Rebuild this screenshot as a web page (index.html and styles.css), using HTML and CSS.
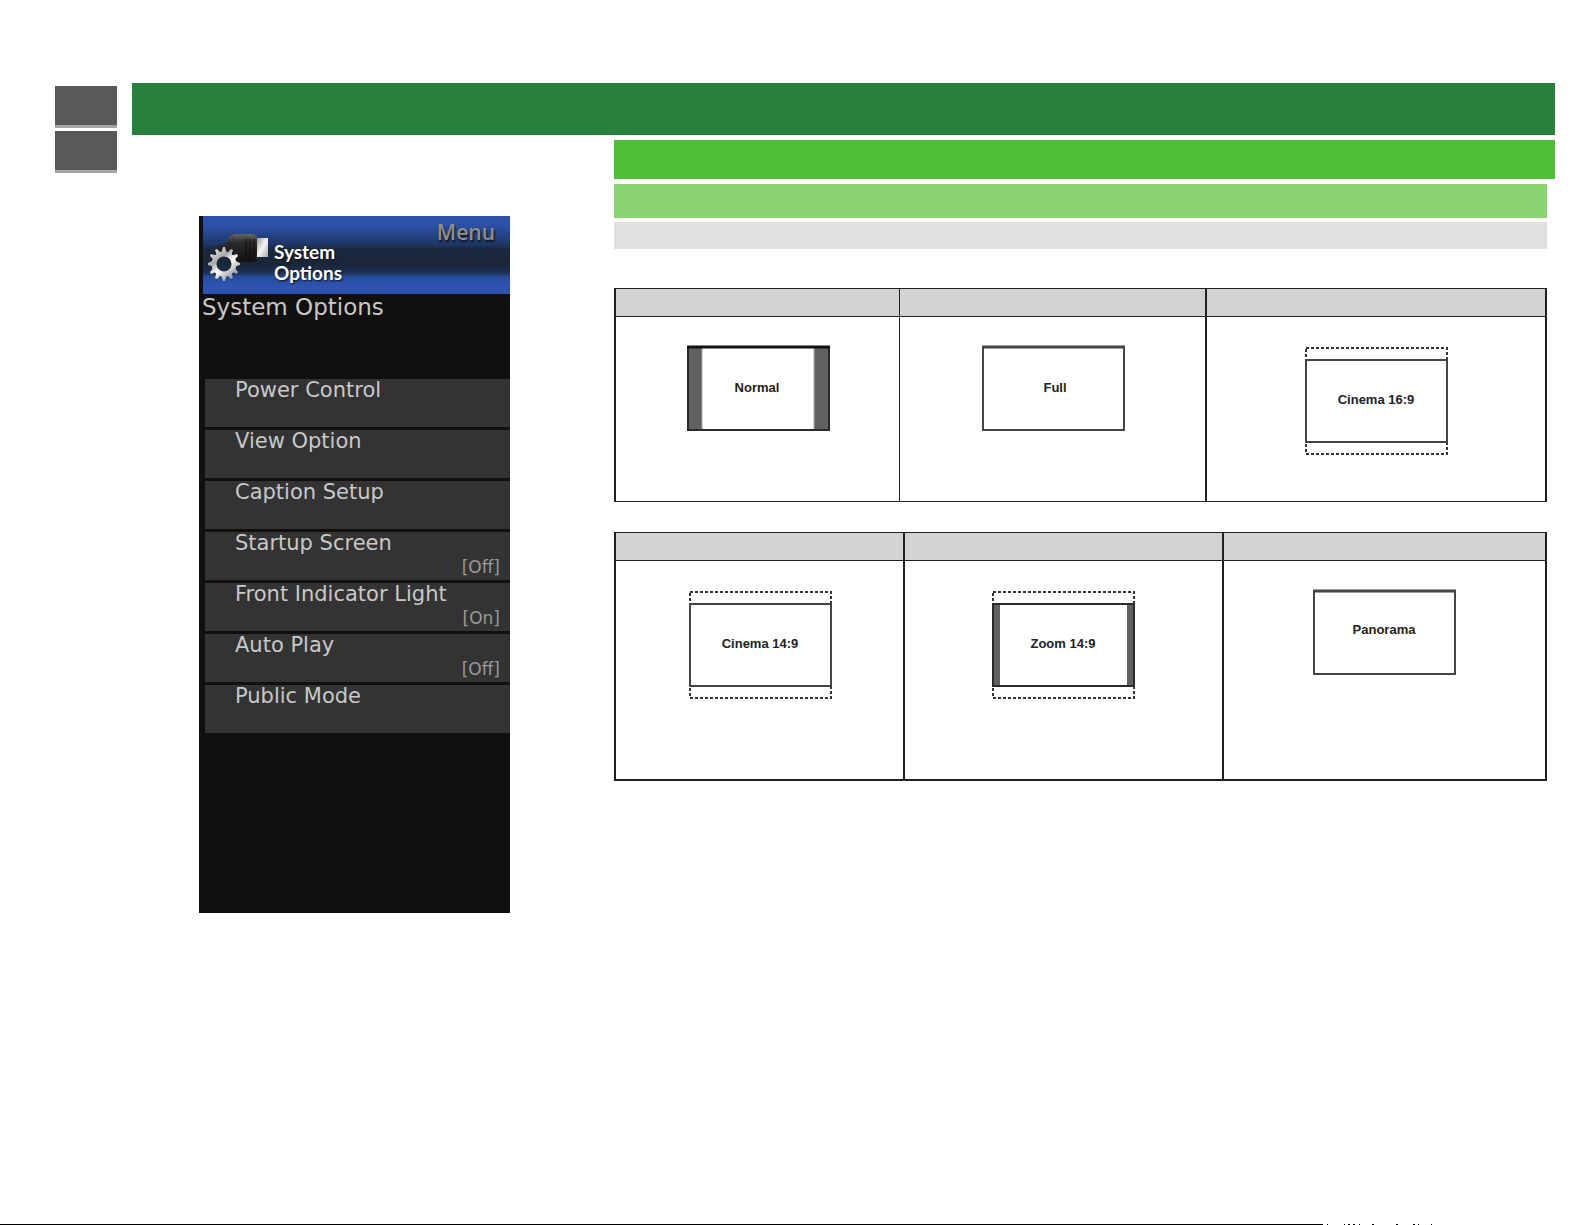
FILE: index.html
```
<!DOCTYPE html>
<html lang="en">
<head>
    <meta charset="UTF-8">
    <meta name="viewport" content="width=device-width, initial-scale=1.0">
    <title>System Options</title>
    <link rel="stylesheet" href="styles.css">
</head>
<body>

    <div class="page">
        <nav class="tabs">
            <a href="#" aria-label="Previous"></a>
            <a href="#" aria-label="Next"></a>
        </nav>

        <div class="content">
            <header class="title-bar"></header>

            <div class="columns">
                <aside class="left">
                    <section class="tv-menu">
                        <div class="menu-head">
                            <svg class="menu-icon" width="64" height="52" viewBox="0 0 64 52">
                                <defs>
                                    <linearGradient id="plug" x1="0" y1="0" x2="0" y2="1">
                                        <stop offset="0" stop-color="#666"/>
                                        <stop offset="0.3" stop-color="#2b2b2b"/>
                                        <stop offset="1" stop-color="#111"/>
                                    </linearGradient>
                                    <linearGradient id="tip" x1="0" y1="0" x2="1" y2="1">
                                        <stop offset="0" stop-color="#999"/>
                                        <stop offset="0.5" stop-color="#f4f4f4"/>
                                        <stop offset="1" stop-color="#aaa"/>
                                    </linearGradient>
                                    <linearGradient id="metal" gradientUnits="userSpaceOnUse" x1="4" y1="14" x2="30" y2="46">
                                        <stop offset="0" stop-color="#eee"/>
                                        <stop offset="0.35" stop-color="#aaa"/>
                                        <stop offset="0.55" stop-color="#fff"/>
                                        <stop offset="1" stop-color="#777"/>
                                    </linearGradient>
                                </defs>
                                <path d="M8 13 L20 10 L22 4 L28 0 L48 0 L51 3 L51 26 L46 28 L24 27 Z" fill="url(#plug)"/>
                                <path d="M40 5 V23 M44 5 V23 M48 5 V23" stroke="#0c0c0c" stroke-width="1"/>
                                <rect x="51" y="4" width="11" height="19" fill="url(#tip)"/>
                                <circle cx="18" cy="30" r="10" fill="none" stroke="url(#metal)" stroke-width="5"/>
                                <path fill="url(#metal)" d="M15 20 L17 13 H19 L21 20Z M20 20 L25 15 L27 16 L25 22Z M24 22 L31 20 L32 22 L27 27Z M27 26 L34 29 V31 L27 33Z M27 32 L32 38 L31 40 L24 37Z M25 37 L27 44 L25 45 L20 40Z M21 40 L19 47 H17 L15 40Z M16 40 L11 45 L9 44 L11 37Z M12 37 L5 40 L4 38 L9 32Z M9 33 L2 31 V29 L9 26Z M9 27 L4 22 L5 20 L12 22Z M11 22 L9 16 L11 15 L16 20Z"/>
                            </svg>
                            <h2 class="menu-name">System<br>Options</h2>
                            <span class="menu-label">Menu</span>
                        </div>
                        <h3 class="menu-title">System Options</h3>
                        <ul class="menu-list">
                            <li><button type="button">Power Control</button></li>
                            <li><button type="button">View Option</button></li>
                            <li><button type="button">Caption Setup</button></li>
                            <li><button type="button">Startup Screen <span>[Off]</span></button></li>
                            <li><button type="button">Front Indicator Light <span>[On]</span></button></li>
                            <li><button type="button">Auto Play <span>[Off]</span></button></li>
                            <li><button type="button">Public Mode</button></li>
                        </ul>
                    </section>
                </aside>

                <main class="right">
                    <div class="bar bar-section"></div>
                    <div class="inner">
                        <div class="bar bar-topic"></div>
                        <div class="bar bar-note"></div>

                        <table class="modes modes-first">
                            <thead>
                                <tr><th></th><th></th><th></th></tr>
                            </thead>
                            <tbody>
                                <tr>
                                    <td>
                                        <svg width="142" height="86">
                                            <rect x="1" y="1" width="14" height="84" fill="#606162"/>
                                            <rect x="127" y="1" width="15" height="84" fill="#606162"/>
                                            <path d="M15 2 V84 M127 2 V84" stroke="#aaa"/>
                                            <rect class="frame dark" x="1" y="1" width="141" height="83"/>
                                            <path class="edge" d="M0 1 H143"/>
                                            <text x="70" y="46">Normal</text>
                                        </svg>
                                    </td>
                                    <td>
                                        <svg width="142" height="86">
                                            <rect class="frame" x="1" y="1" width="141" height="83"/>
                                            <path class="edge soft" d="M0 1 H143"/>
                                            <text x="73" y="46">Full</text>
                                        </svg>
                                    </td>
                                    <td>
                                        <svg width="142" height="110">
                                            <rect class="dots" x="1" y="2" width="141" height="106"/>
                                            <rect class="frame" x="1" y="14" width="141" height="82"/>
                                            <text x="71" y="58">Cinema 16:9</text>
                                        </svg>
                                    </td>
                                </tr>
                            </tbody>
                        </table>

                        <table class="modes modes-second">
                            <thead>
                                <tr><th></th><th></th><th></th></tr>
                            </thead>
                            <tbody>
                                <tr>
                                    <td>
                                        <svg width="142" height="110">
                                            <rect class="dots" x="1" y="2" width="141" height="106"/>
                                            <rect class="frame" x="1" y="14" width="141" height="82"/>
                                            <text x="71" y="58">Cinema 14:9</text>
                                        </svg>
                                    </td>
                                    <td>
                                        <svg width="142" height="110">
                                            <rect class="dots" x="1" y="2" width="141" height="106"/>
                                            <rect x="1" y="14" width="7" height="82" fill="#606162"/>
                                            <rect x="135" y="14" width="7" height="82" fill="#606162"/>
                                            <rect class="frame dark" x="1" y="14" width="141" height="82"/>
                                            <text x="71" y="58">Zoom 14:9</text>
                                        </svg>
                                    </td>
                                    <td>
                                        <svg width="142" height="86">
                                            <rect class="frame" x="1" y="1" width="141" height="83"/>
                                            <path class="edge soft" d="M0 1 H143"/>
                                            <text x="71" y="44">Panorama</text>
                                        </svg>
                                    </td>
                                </tr>
                            </tbody>
                        </table>
                    </div>
                </main>
            </div>
        </div>
    </div>

    <footer class="page-end">
        <div class="rule"></div>
        <svg width="112" height="1" viewBox="0 0 112 1">
            <path d="M4 0h1v1h-1z M21 0h1v1h-1z M25 0h2v1h-2z M30 0h2v1h-2z M36 0h1v1h-1z M49 0h2v1h-2z M73 0h2v1h-2z M90 0h2v1h-2z M95 0h1v1h-1z M108 0h1v1h-1z"/>
        </svg>
    </footer>

</body>
</html>
```
FILE: styles.css
```
* {
    box-sizing: border-box;
}
body {
    margin: 0;
    min-height: 100vh;
    display: flex;
    flex-direction: column;
    background: white;
    font-family: "Liberation Sans", Arial, sans-serif;
}
.page {
    flex: 1;
    display: flex;
    gap: 15px;
    padding: 83px 30px 0 55px;
}

/* page tabs */
.tabs {
    flex: none;
    width: 62px;
    padding-top: 3px;
}
.tabs a {
    display: block;
    height: 42px;
    margin-bottom: 3px;
    background: #5a5859;
    border-bottom: 3px solid #a5a5a5;
}

.content {
    flex: 1;
    min-width: 0;
}
.title-bar {
    height: 52px;
    background: #27813c;
}
.columns {
    display: grid;
    grid-template-columns: 482fr 941fr;
}
.left {
    padding: 81px 0 0 67px;
}
.right {
    padding-top: 5px;
}
.inner {
    padding-right: 8px;
}
.bar {
    margin-bottom: 5px;
}
.bar-section {
    height: 39px;
    background: #4fbe36;
}
.bar-topic {
    height: 34px;
    margin-bottom: 4px;
    background: #89d374;
}
.bar-note {
    height: 27px;
    margin-bottom: 39px;
    background: #e0e0e0;
}

/* tv menu */
.tv-menu {
    max-width: 311px;
    padding-bottom: 180px;
    background: #11100e;
    color: #c8c8c8;
    font-family: "DejaVu Sans", Verdana, sans-serif;
}
.menu-head {
    display: flex;
    align-items: flex-start;
    height: 78px;
    margin-left: 4px;
    padding: 5px 15px 0 3px;
    background: linear-gradient(#2d54ae 0%, #2b50a6 12%, #1f3768 36%, #1b2941 42%, #1a2538 62%, #1e315a 73%, #284b9b 78%, #2d54b0 90%, #2b53ae 100%);
}
.menu-icon {
    flex: none;
    margin-top: 13px;
}
.menu-name {
    margin: 20px 0 0 4px;
    color: white;
    font: bold 19px/21px Lato, sans-serif;
    text-shadow: 1px 1px 2px #111;
}
.menu-label {
    margin-left: auto;
    color: #8e8e8e;
    font: 600 21px/22px "Open Sans", sans-serif;
    text-shadow: 1px 2px 2px #111;
}
.menu-title {
    margin: 0 0 59px 3px;
    font-size: 23px;
    line-height: 26px;
    font-weight: normal;
}
.menu-list {
    display: grid;
    gap: 3px;
    margin: 0 0 0 6px;
    padding: 0;
    list-style: none;
}
.menu-list button {
    display: flex;
    flex-direction: column;
    justify-content: flex-start;
    width: 100%;
    min-height: 48px;
    padding: 0 10px 0 30px;
    border: 0;
    background: #333;
    color: #c8c8c8;
    font: 21px/23px "DejaVu Sans", Verdana, sans-serif;
    text-align: left;
    cursor: pointer;
}
.menu-list span {
    align-self: flex-end;
    color: #999;
    font-size: 17px;
    line-height: 24px;
}

/* view mode tables */
.modes {
    width: 100%;
    table-layout: fixed;
    border-collapse: separate;
    border-spacing: 0;
    border: solid #231f20;
    border-width: 1px 2px;
}
.modes-first {
    margin-bottom: 30px;
}
.modes-second {
    border-bottom-width: 2px;
}
.modes th {
    height: 28px;
    padding: 0;
    background: #d2d2d2;
    border-bottom: 1px solid #231f20;
}
.modes td {
    padding: 29px 0 45px;
    vertical-align: top;
}
.modes-second td {
    padding-bottom: 79px;
}
.modes th + th, .modes td + td {
    border-left: 2px solid #231f20;
}
.modes-first th:nth-child(2), .modes-first td:nth-child(2) {
    border-left-width: 1px;
}
.modes-first th:nth-child(1) {
    width: 30.5%;
}
.modes-first th:nth-child(2) {
    width: 32.9%;
}
.modes-second th:nth-child(1) {
    width: 30.9%;
}
.modes-second th:nth-child(2) {
    width: 34.3%;
}
.modes svg {
    display: block;
    margin: 0 auto;
    overflow: visible;
}
.frame {
    fill: none;
    stroke: #444;
    stroke-width: 2;
}
.dark {
    stroke: #2a2a2a;
}
.edge {
    fill: none;
    stroke: #111;
    stroke-width: 3;
}
.soft {
    stroke: #444;
}
.dots {
    fill: none;
    stroke: #333;
    stroke-width: 2;
    stroke-dasharray: 3 2;
}
.modes text {
    fill: #222;
    font-size: 13px;
    font-weight: bold;
    text-anchor: middle;
}

/* bottom rule */
.page-end {
    display: flex;
    height: 1px;
}
.rule {
    width: 83.5%;
    background: black;
}
```
